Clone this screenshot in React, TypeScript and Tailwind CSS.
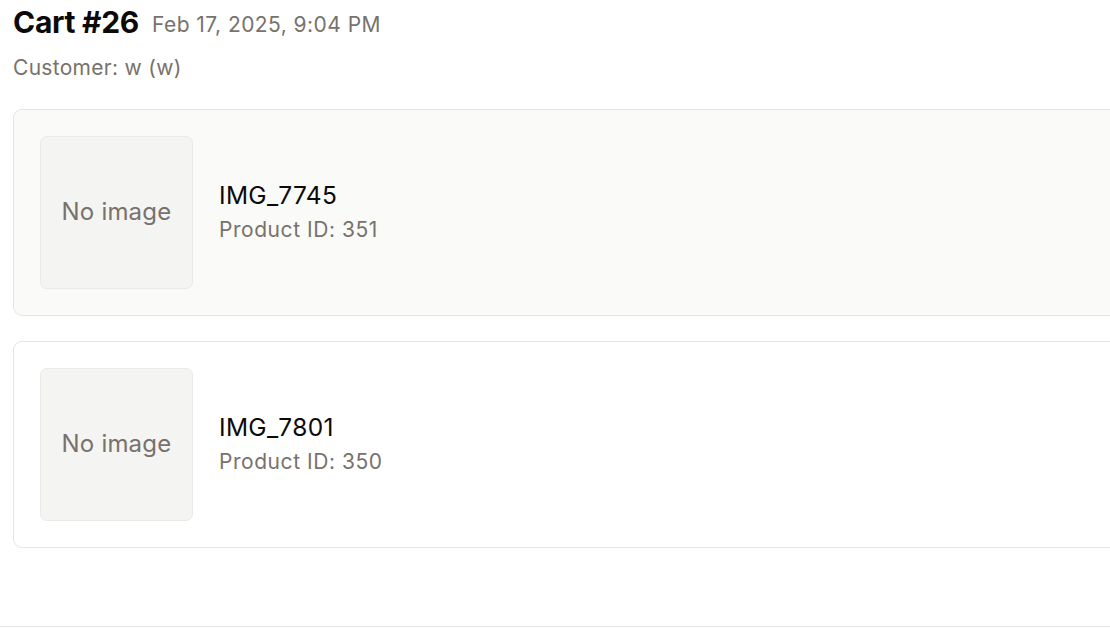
import React from 'react';

interface CartItem {
  id: number;
  name: string;
  highlighted?: boolean;
}

const items: CartItem[] = [
  { id: 351, name: 'IMG_7745', highlighted: true },
  { id: 350, name: 'IMG_7801' },
];

const ItemCard: React.FC<{ item: CartItem }> = ({ item }) => (
  <div
    className={`flex items-center gap-[26px] rounded-[9px] border border-[#e7e5e4] p-[26px] ${
      item.highlighted ? 'bg-[#fafaf9]' : 'bg-white'
    }`}
  >
    <div className="flex h-[153px] w-[153px] shrink-0 items-center justify-center rounded-[7px] border border-[#ebe9e7] bg-[#f4f4f3]">
      <span className="text-[24px] tracking-[0.2px] text-[#78716c]">No image</span>
    </div>
    <div className="flex flex-col">
      <span className="text-[24.5px] leading-[33px] tracking-[0.3px] text-[#0c0a09]">{item.name}</span>
      <span className="mt-[3px] text-[21px] leading-[30px] tracking-[0.55px] text-[#78716c]">Product ID: {item.id}</span>
    </div>
  </div>
);

export default function App() {
  return (
    <div
      className="h-[628px] w-[1110px] overflow-hidden bg-white"
      style={{ fontFamily: 'Inter, "Noto Sans", sans-serif' }}
    >
      <div className="h-[627px] border-b border-[#e7e5e4] pl-[13px] pt-[4px]">
        <div className="flex items-baseline gap-[13px]">
          <h1 className="text-[30px] font-bold leading-[36px] tracking-[-0.3px] text-[#0c0a09]">Cart #26</h1>
          <span className="relative top-[-1px] text-[21px] tracking-[0.45px] text-[#78716c]">Feb 17, 2025, 9:04 PM</span>
        </div>
        <p className="mt-[12px] text-[21px] leading-[28px] tracking-[0.3px] text-[#78716c]">Customer: w (w)</p>
        <div className="mr-[-30px] mt-[27px] flex flex-col gap-[25px]">
          {items.map((item) => (
            <ItemCard key={item.id} item={item} />
          ))}
        </div>
      </div>
    </div>
  );
}
